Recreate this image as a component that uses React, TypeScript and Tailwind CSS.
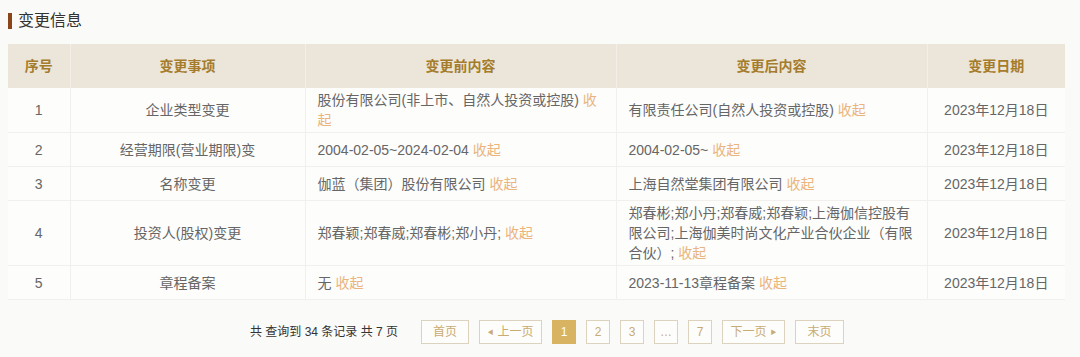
import React from "react"

type Row = {
  no: number
  item: string
  before: string
  after: string
  date: string
}

const rows: Row[] = [
  {
    no: 1,
    item: "企业类型变更",
    before: "股份有限公司(非上市、自然人投资或控股)",
    after: "有限责任公司(自然人投资或控股)",
    date: "2023年12月18日",
  },
  {
    no: 2,
    item: "经营期限(营业期限)变",
    before: "2004-02-05~2024-02-04",
    after: "2004-02-05~",
    date: "2023年12月18日",
  },
  {
    no: 3,
    item: "名称变更",
    before: "伽蓝（集团）股份有限公司",
    after: "上海自然堂集团有限公司",
    date: "2023年12月18日",
  },
  {
    no: 4,
    item: "投资人(股权)变更",
    before: "郑春颖;郑春威;郑春彬;郑小丹;",
    after: "郑春彬;郑小丹;郑春威;郑春颖;上海伽信控股有限公司;上海伽美时尚文化产业合伙企业（有限合伙）;",
    date: "2023年12月18日",
  },
  {
    no: 5,
    item: "章程备案",
    before: "无",
    after: "2023-11-13章程备案",
    date: "2023年12月18日",
  },
]

function Collapse() {
  return <span className="text-[#eab47c]">收起</span>
}

function PageButton({
  children,
  active,
  wide,
}: {
  children: React.ReactNode
  active?: boolean
  wide?: string
}) {
  return (
    <span
      className={
        "h-6 flex items-center justify-center border text-xs " +
        (wide ?? "w-6") +
        " " +
        (active
          ? "bg-[#d8b462] border-[#d8b462] text-white"
          : "border-[#dcd3bf] text-[#c9ab72] bg-[#fdfdfc]")
      }
    >
      {children}
    </span>
  )
}

export default function App() {
  return (
    <div
      className="w-[1080px] h-[357px] bg-[#fafaf8] text-[#666] overflow-hidden"
      style={{ fontFamily: '"Liberation Sans", "Noto Sans CJK SC", sans-serif' }}
    >
      {/* Section title */}
      <div className="flex items-center h-[41px] pl-2 pt-[1px]">
        <span className="w-1 h-4 bg-[#8a4518] mr-[6px]" />
        <span className="text-base text-[#333]">变更信息</span>
      </div>

      {/* Change table */}
      <div className="pl-2 pt-[3px]">
        <table className="w-[1057px] table-fixed border-collapse text-sm leading-5">
          <colgroup>
            <col className="w-[62px]" />
            <col className="w-[235px]" />
            <col className="w-[311px]" />
            <col className="w-[311px]" />
            <col className="w-[138px]" />
          </colgroup>
          <thead>
            <tr className="h-11 bg-[#ece6da] text-[#a57c2b] font-bold">
              <th className="border-r border-[#f3efe7]">序号</th>
              <th className="border-r border-[#f3efe7]">变更事项</th>
              <th className="border-r border-[#f3efe7]">变更前内容</th>
              <th className="border-r border-[#f3efe7]">变更后内容</th>
              <th>变更日期</th>
            </tr>
          </thead>
          <tbody className="bg-[#fdfdfc]">
            {rows.map((r) => (
              <tr key={r.no} className="h-[34px] border-b border-[#f1f0ed]">
                <td className="text-center border-r border-[#f1f0ed] py-[2px]">{r.no}</td>
                <td className="text-center border-r border-[#f1f0ed] py-[2px]">{r.item}</td>
                <td className="px-3 border-r border-[#f1f0ed] py-[2px]">
                  {r.before} <Collapse />
                </td>
                <td className="px-3 border-r border-[#f1f0ed] py-[2px]">
                  {r.after} <Collapse />
                </td>
                <td className="text-center py-[2px]">{r.date}</td>
              </tr>
            ))}
          </tbody>
        </table>
      </div>

      {/* Pagination */}
      <div className="flex items-center mt-5 pl-[250px] gap-[10px]">
        <span className="text-xs text-[#333] mr-[13px]">共 查询到 34 条记录 共 7 页</span>
        <PageButton wide="w-12">首页</PageButton>
        <PageButton wide="w-[63px]">
          <span className="text-[6px] mr-1">◀</span>上一页
        </PageButton>
        <PageButton active>1</PageButton>
        <PageButton>2</PageButton>
        <PageButton>3</PageButton>
        <PageButton>…</PageButton>
        <PageButton>7</PageButton>
        <PageButton wide="w-[63px]">
          下一页<span className="text-[6px] ml-1">▶</span>
        </PageButton>
        <PageButton wide="w-[49px]">末页</PageButton>
      </div>
    </div>
  )
}
